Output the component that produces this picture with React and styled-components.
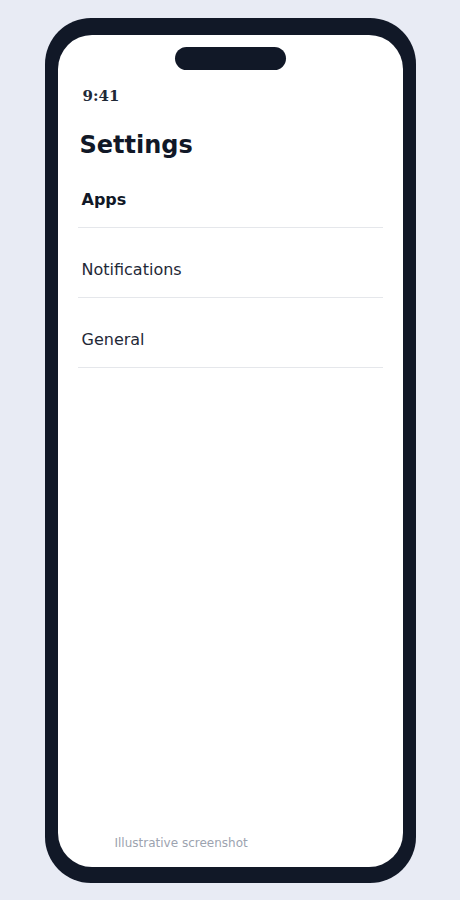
import React from "react";
import styled, { createGlobalStyle } from "styled-components";

const GlobalStyle = createGlobalStyle`
  html, body {
    margin: 0;
    padding: 0;
    background: #e8ebf4;
  }
  body {
    font-family: "DejaVu Sans", sans-serif;
  }
`;

const rows = [
  { id: "apps", label: "Apps", bold: true },
  { id: "notifications", label: "Notifications" },
  { id: "general", label: "General" },
];

const App = () => {
  return (
    <>
      <GlobalStyle />
      <Page>
        <Frame>
          <Screen>
            <Notch />
            <StatusBar>9:41</StatusBar>
            <Title>Settings</Title>
            <List>
              {rows.map((row) => (
                <Row key={row.id} $bold={row.bold}>
                  {row.label}
                </Row>
              ))}
            </List>
            <Footer>Illustrative screenshot</Footer>
          </Screen>
        </Frame>
      </Page>
    </>
  );
};

const Page = styled.div`
  display: flex;
  justify-content: center;
  padding-top: 18px;
  height: 900px;
  box-sizing: border-box;
`;

const Frame = styled.div`
  width: 371px;
  height: 865px;
  box-sizing: border-box;
  padding: 17px 13px 16px;
  background: #111827;
  border-radius: 46px;
  display: flex;
`;

const Screen = styled.div`
  flex: 1;
  background: #fff;
  border-radius: 34px;
  display: flex;
  flex-direction: column;
  overflow: hidden;
`;

const Notch = styled.div`
  align-self: center;
  width: 111px;
  height: 23px;
  margin-top: 12px;
  border-radius: 12px;
  background: #111827;
`;

const StatusBar = styled.div`
  padding: 17px 0 0 25px;
  font-family: "DejaVu Serif", serif;
  font-weight: 700;
  font-size: 15px;
  line-height: 18px;
  color: #1f2937;
`;

const Title = styled.h1`
  margin: 28px 0 0 22px;
  font-size: 24px;
  line-height: 24px;
  font-weight: 700;
  color: #111827;
`;

const List = styled.div`
  display: flex;
  flex-direction: column;
  margin: 1px 20px 0 20px;
`;

const Row = styled.div`
  height: 70px;
  box-sizing: border-box;
  padding: 32px 0 0 4px;
  border-bottom: 1px solid #e5e7eb;
  font-size: 16px;
  line-height: 20px;
  font-weight: ${({ $bold }) => ($bold ? 700 : 400)};
  color: ${({ $bold }) => ($bold ? "#111827" : "#1f2937")};
`;

const Footer = styled.div`
  margin-top: auto;
  padding: 0 0 16px 57px;
  font-size: 12px;
  line-height: 15px;
  color: #9ca3af;
`;

export default App;
